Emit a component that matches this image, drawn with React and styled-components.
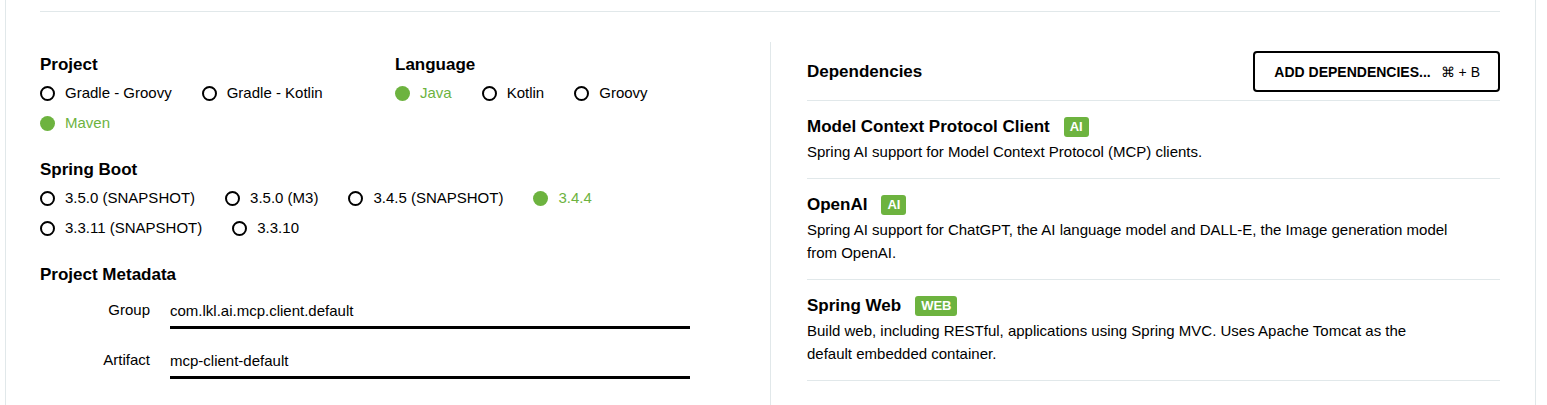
import React from 'react';
import styled, { createGlobalStyle } from 'styled-components';

const GlobalStyle = createGlobalStyle`
  html, body { margin: 0; padding: 0; background: #fff; }
  body {
    font-family: "Liberation Sans", Helvetica, Arial, sans-serif;
    color: #000;
  }
  * { box-sizing: border-box; }
`;

const LINE = '#e1e8ea';
const GREEN = '#6db33f';

const Page = styled.div`
  margin-left: 5px;
  width: 1531px;
  min-height: 405px;
  border-left: 1px solid ${LINE};
  border-right: 1px solid ${LINE};
  padding: 0 35px 0 34px;
  overflow: hidden;
`;

const TopRule = styled.div`
  height: 12px;
  border-bottom: 1px solid ${LINE};
`;

const Columns = styled.div`
  display: flex;
  margin-top: 30px;
`;

const LeftCol = styled.div`
  width: 731px;
  min-height: 400px;
  border-right: 1px solid ${LINE};
  padding-top: 13px;
`;

const RightCol = styled.div`
  flex: 1;
  padding-left: 36px;
`;

const SectionRow = styled.div`
  display: flex;
`;

const Section = styled.div`
  width: ${p => p.$width || 'auto'};
  flex: ${p => (p.$width ? 'none' : '1')};
  margin-bottom: 26px;
`;

const Heading = styled.h2`
  margin: 0 0 7px;
  font-size: 17px;
  line-height: 20px;
  font-weight: 700;
`;

const RadioGroup = styled.div`
  display: flex;
  flex-wrap: wrap;
  column-gap: 30px;
  row-gap: 8px;
`;

const RadioItem = styled.label`
  display: flex;
  align-items: center;
  gap: 10px;
  height: 22px;
  font-size: 15px;
  line-height: 22px;
  color: ${p => (p.$checked ? GREEN : '#000')};
  white-space: nowrap;
  cursor: pointer;
`;

const RadioDot = styled.span`
  width: 15px;
  height: 15px;
  border-radius: 50%;
  flex: none;
  border: ${p => (p.$checked ? 'none' : '2px solid #000')};
  background: ${p => (p.$checked ? GREEN : '#fff')};
`;

const MetaList = styled.div`
  margin-top: 9px;
  display: flex;
  flex-direction: column;
  gap: 15px;
`;

const MetaRow = styled.div`
  display: grid;
  grid-template-columns: 110px 520px;
  column-gap: 20px;
  align-items: start;
`;

const MetaLabel = styled.label`
  text-align: right;
  font-size: 15px;
  line-height: 32px;
  color: #000;
`;

const MetaInput = styled.input`
  width: 520px;
  height: 35px;
  padding: 0;
  border: none;
  border-bottom: 3px solid #000;
  outline: none;
  background: transparent;
  font-family: "Liberation Sans", Helvetica, Arial, sans-serif;
  font-size: 15px;
  color: #000;
`;

const DepHeader = styled.div`
  display: flex;
  align-items: center;
  justify-content: space-between;
  padding: 9px 0 8px;
  border-bottom: 1px solid ${LINE};
`;

const DepHeading = styled.h2`
  margin: 0;
  font-size: 17px;
  line-height: 20px;
  font-weight: 700;
`;

const AddButton = styled.button`
  display: inline-flex;
  align-items: center;
  gap: 10px;
  height: 41px;
  padding: 0 18px 0 19px;
  border: 2px solid #000;
  border-radius: 4px;
  background: #fff;
  color: #000;
  font-family: "Liberation Sans", Helvetica, Arial, sans-serif;
  font-size: 14px;
  font-weight: 700;
  cursor: pointer;
`;

const Shortcut = styled.span`
  font-weight: 400;
`;

const DepItem = styled.div`
  padding: 16px 0 15px;
  border-bottom: 1px solid ${LINE};
`;

const DepTitleRow = styled.div`
  display: flex;
  align-items: center;
  height: 20px;
`;

const DepTitle = styled.span`
  font-size: 17px;
  font-weight: 700;
  line-height: 20px;
`;

const Badge = styled.span`
  margin-left: 14px;
  height: 20px;
  padding: 0 6px;
  border-radius: 3px;
  background: ${GREEN};
  color: #fff;
  font-size: 13px;
  font-weight: 700;
  line-height: 20px;
`;

const DepDesc = styled.p`
  margin: 3px 0 0;
  max-width: 644px;
  font-size: 15px;
  line-height: 23px;
`;

const Radio = ({ label, checked }) => (
  <RadioItem $checked={checked}>
    <RadioDot $checked={checked} />
    {label}
  </RadioItem>
);

const projects = [
  { label: 'Gradle - Groovy' },
  { label: 'Gradle - Kotlin' },
  { label: 'Maven', checked: true },
];

const languages = [
  { label: 'Java', checked: true },
  { label: 'Kotlin' },
  { label: 'Groovy' },
];

const boots = [
  { label: '3.5.0 (SNAPSHOT)' },
  { label: '3.5.0 (M3)' },
  { label: '3.4.5 (SNAPSHOT)' },
  { label: '3.4.4', checked: true },
  { label: '3.3.11 (SNAPSHOT)' },
  { label: '3.3.10' },
];

const deps = [
  {
    title: 'Model Context Protocol Client',
    badge: 'AI',
    desc: 'Spring AI support for Model Context Protocol (MCP) clients.',
  },
  {
    title: 'OpenAI',
    badge: 'AI',
    desc: 'Spring AI support for ChatGPT, the AI language model and DALL-E, the Image generation model from OpenAI.',
  },
  {
    title: 'Spring Web',
    badge: 'WEB',
    desc: 'Build web, including RESTful, applications using Spring MVC. Uses Apache Tomcat as the default embedded container.',
  },
];

export default function App() {
  return (
    <>
      <GlobalStyle />
      <Page>
        <TopRule />
        <Columns>
          <LeftCol>
            <SectionRow>
              <Section $width="355px">
                <Heading>Project</Heading>
                <RadioGroup>
                  {projects.map(p => (
                    <Radio key={p.label} {...p} />
                  ))}
                </RadioGroup>
              </Section>
              <Section>
                <Heading>Language</Heading>
                <RadioGroup>
                  {languages.map(p => (
                    <Radio key={p.label} {...p} />
                  ))}
                </RadioGroup>
              </Section>
            </SectionRow>
            <Section>
              <Heading>Spring Boot</Heading>
              <RadioGroup>
                {boots.map(p => (
                  <Radio key={p.label} {...p} />
                ))}
              </RadioGroup>
            </Section>
            <Section>
              <Heading>Project Metadata</Heading>
              <MetaList>
                <MetaRow>
                  <MetaLabel>Group</MetaLabel>
                  <MetaInput readOnly value="com.lkl.ai.mcp.client.default" />
                </MetaRow>
                <MetaRow>
                  <MetaLabel>Artifact</MetaLabel>
                  <MetaInput readOnly value="mcp-client-default" />
                </MetaRow>
              </MetaList>
            </Section>
          </LeftCol>
          <RightCol>
            <DepHeader>
              <DepHeading>Dependencies</DepHeading>
              <AddButton>
                ADD DEPENDENCIES...
                <Shortcut>⌘ + B</Shortcut>
              </AddButton>
            </DepHeader>
            {deps.map(d => (
              <DepItem key={d.title}>
                <DepTitleRow>
                  <DepTitle>{d.title}</DepTitle>
                  <Badge>{d.badge}</Badge>
                </DepTitleRow>
                <DepDesc>{d.desc}</DepDesc>
              </DepItem>
            ))}
          </RightCol>
        </Columns>
      </Page>
    </>
  );
}
